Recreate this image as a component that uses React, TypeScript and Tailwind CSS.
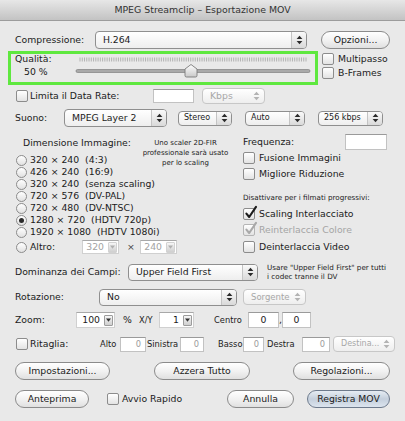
import { ReactNode } from "react";
import clsx from "clsx";

const UpDown = ({ color = "#2b2b2b" }: { color?: string }) => (
  <svg width="7" height="10" viewBox="0 0 7 10">
    <path d="M0.6 4 L3.5 0.8 L6.4 4 Z" fill={color} />
    <path d="M0.6 6 L3.5 9.2 L6.4 6 Z" fill={color} />
  </svg>
);

const Check = ({ checked = false, disabled = false }: { checked?: boolean; disabled?: boolean }) => (
  <span
    className={clsx(
      "relative block w-[12px] h-[12px] shrink-0 rounded-[2px] border bg-linear-to-b from-white to-[#e3e3e3]",
      disabled ? "border-[#b5b5b5]" : "border-[#8c8c8c]"
    )}
  >
    {checked && (
      <svg className="absolute -top-[4px] left-[0px]" width="14" height="15" viewBox="0 0 14 15">
        <path
          d="M2.4 8.6 L5.2 12 L12 1.8"
          fill="none"
          stroke={disabled ? "#a9a9a9" : "#1c1c1c"}
          strokeWidth="2.1"
          strokeLinecap="round"
          strokeLinejoin="round"
        />
      </svg>
    )}
  </span>
);

const Radio = ({ on = false }: { on?: boolean }) => (
  <span className="flex w-[11px] h-[11px] shrink-0 items-center justify-center rounded-full border border-[#8c8c8c] bg-linear-to-b from-white to-[#e1e1e1]">
    {on && <span className="block w-[5px] h-[5px] rounded-full bg-[#2b2b2b]" />}
  </span>
);

interface PopupProps {
  label: string;
  className?: string;
  mini?: boolean;
  disabled?: boolean;
}

const Popup = ({ label, className, mini, disabled }: PopupProps) => (
  <div
    className={clsx(
      "flex items-stretch rounded-[4px] border bg-linear-to-b from-white to-[#eeeeee] overflow-hidden",
      disabled ? "border-[#c7c7c7] text-[#a7a7a7]" : "border-[#8f8f8f]",
      mini ? "text-[8px]" : "",
      className
    )}
  >
    <span className={clsx("flex flex-1 items-center whitespace-nowrap", mini ? "pl-[5px]" : "pl-[7px]")}>{label}</span>
    <span
      className={clsx(
        "flex w-[15px] items-center justify-center",
        disabled ? "" : "bg-linear-to-b from-[#fafafa] to-[#d9d9d9] border-l border-[#c4c4c4]"
      )}
    >
      <UpDown color={disabled ? "#b3b3b3" : "#2b2b2b"} />
    </span>
  </div>
);

const Button = ({ children, className, primary }: { children: ReactNode; className?: string; primary?: boolean }) => (
  <button
    type="button"
    className={clsx(
      "flex h-[18px] items-center justify-center rounded-full border leading-none",
      primary
        ? "border-[#6d7a8c] bg-linear-to-b from-[#e6ecf3] via-[#c4cfdc] to-[#dce4ee]"
        : "border-[#8b8b8b] bg-linear-to-b from-white via-[#f2f2f2] to-[#e0e0e0]",
      className
    )}
  >
    {children}
  </button>
);

const Field = ({ value, className, muted }: { value?: string; className?: string; muted?: boolean }) => (
  <div
    className={clsx(
      "flex items-center justify-end bg-white border border-[#c2c2c2] border-t-[#9a9a9a] pr-[4px]",
      muted ? "text-[#9c9c9c]" : "",
      className
    )}
  >
    {value}
  </div>
);

const Combo = ({ value, className, muted }: { value: string; className?: string; muted?: boolean }) => (
  <div
    className={clsx(
      "flex items-center bg-white border border-[#d0d0d0] border-t-[#a8a8a8]",
      muted ? "text-[#a3a3a3]" : "",
      className
    )}
  >
    <span className="flex-1 text-right pr-[4px]">{value}</span>
    <span
      className={clsx(
        "flex w-[9px] h-[11px] mr-[1px] items-center justify-center rounded-[1px] border bg-linear-to-b from-[#f6f6f6] to-[#cfcfcf]",
        muted ? "border-[#d2d2d2]" : "border-[#9c9c9c]"
      )}
    >
      <svg width="5" height="4" viewBox="0 0 5 4">
        <path d="M0 0.5 L5 0.5 L2.5 3.8 Z" fill={muted ? "#b0b0b0" : "#333"} />
      </svg>
    </span>
  </div>
);

const CheckRow = ({
  label,
  checked,
  disabled,
  className,
}: {
  label: string;
  checked?: boolean;
  disabled?: boolean;
  className?: string;
}) => (
  <div className={clsx("flex h-[14px] items-center", className)}>
    <Check checked={checked} disabled={disabled} />
    <span className={clsx("ml-[4px]", disabled ? "text-[#a5a5a5]" : "")}>{label}</span>
  </div>
);

const QualitySlider = () => {
  const ticks = Array.from({ length: 101 }, (_, i) => 6 + i * 2.26);
  const knob = 117;
  return (
    <svg width="240" height="27" viewBox="0 0 240 27">
      {ticks.map((x) => (
        <line key={x} x1={x} y1="3.5" x2={x} y2="7.5" stroke="#a3a3a3" strokeWidth="0.8" />
      ))}
      <rect x="2" y="15.5" width="234" height="3" rx="1.5" fill="#a9a9a9" stroke="#7f7f7f" strokeWidth="0.7" />
      <defs>
        <linearGradient id="knobFill" x1="0" y1="0" x2="0" y2="1">
          <stop offset="0" stopColor="#ffffff" />
          <stop offset="1" stopColor="#c9c9c9" />
        </linearGradient>
      </defs>
      <path
        d={`M${knob} 10.5 L${knob + 6} 15 L${knob + 6} 21.5 Q${knob + 6} 23 ${knob + 4.5} 23 L${knob - 4.5} 23 Q${knob - 6} 23 ${knob - 6} 21.5 L${knob - 6} 15 Z`}
        fill="url(#knobFill)"
        stroke="#7a7a7a"
        strokeWidth="0.9"
        strokeLinejoin="round"
      />
    </svg>
  );
};

const sizes: [string, boolean][] = [
  ["320 × 240  (4:3)", false],
  ["426 × 240  (16:9)", false],
  ["320 × 240  (senza scaling)", false],
  ["720 × 576  (DV-PAL)", false],
  ["720 × 480  (DV-NTSC)", false],
  ["1280 × 720  (HDTV 720p)", true],
  ["1920 × 1080  (HDTV 1080i)", false],
];

export default function App() {
  return (
    <div className="w-[405px] h-[421px] overflow-hidden bg-[#e9e9e9] text-[#1b1b1b] text-[9.3px] leading-none font-['DejaVu_Sans',sans-serif]">
      {/* title bar */}
      <div className="flex h-[21px] items-center justify-center border-b border-[#9c9c9c] bg-linear-to-b from-[#e7e7e7] to-[#c3c3c3] text-[9.4px] text-[#333]">
        MPEG Streamclip – Esportazione MOV
      </div>

      <div className="flex flex-col">
        {/* compression */}
        <div className="mt-[10px] flex h-[18px] items-center pl-[15px]">
          <span className="w-[80px]">Compressione:</span>
          <Popup label="H.264" className="w-[212px] h-[18px]" />
          <Button className="ml-[14px] w-[69px]">Opzioni...</Button>
        </div>

        {/* quality */}
        <div className="mt-[2px] flex h-[34px]">
          <div className="ml-[8px] flex w-[310px] h-[34px] border-[3px] border-[#5fe83f]">
            <div className="flex w-[63px] flex-col pl-[4px]">
              <div className="flex h-[9px] items-center">Qualità:</div>
              <div className="mt-[4px] flex h-[9px] items-center pl-[9px]">50 %</div>
            </div>
            <QualitySlider />
          </div>
          <div className="ml-[4px] flex flex-col pt-[1px]">
            <CheckRow label="Multipasso" />
            <CheckRow label="B-Frames" />
          </div>
        </div>

        {/* data rate */}
        <div className="mt-[2px] flex h-[18px] items-center pl-[16px]">
          <Check />
          <span className="ml-[2px] w-[123px]">Limita il Data Rate:</span>
          <Field className="w-[41px] h-[14px]" />
          <Popup label="Kbps" disabled className="ml-[8px] w-[63px] h-[16px]" />
        </div>

        {/* audio */}
        <div className="mt-[4px] flex h-[18px] items-center pl-[15px]">
          <span className="w-[49px]">Suono:</span>
          <Popup label="MPEG Layer 2" className="w-[103px] h-[18px]" />
          <Popup label="Stereo" mini className="ml-[11px] w-[54px] h-[15px]" />
          <Popup label="Auto" mini className="ml-[13px] w-[60px] h-[15px]" />
          <Popup label="256 kbps" mini className="ml-[13px] w-[65px] h-[15px]" />
        </div>

        {/* image size + frame options */}
        <div className="mt-[5px] flex h-[123px]">
          <div className="flex w-[243px] flex-col pl-[16px]">
            <div className="flex">
              <div className="flex w-[122px] flex-col">
                <div className="flex h-[22px] items-center pl-[7px]">Dimensione Immagine:</div>
                {sizes.map(([label, on]) => (
                  <div key={label} className="flex h-[12px] items-center">
                    <Radio on={on} />
                    <span className="ml-[3px] whitespace-pre">{label}</span>
                  </div>
                ))}
              </div>
              <div className="w-[95px] pt-[6px] text-center text-[7px] leading-[10px] whitespace-nowrap">
                Uno scaler 2D-FIR
                <br />
                professionale sarà usato
                <br />
                per lo scaling
              </div>
            </div>
            <div className="mt-[3px] flex h-[12px] items-center">
              <Radio />
              <span className="ml-[3px] w-[52px]">Altro:</span>
              <Combo value="320" muted className="w-[37px] h-[14px]" />
              <span className="ml-[8px] w-[13px] text-[#444]">×</span>
              <Combo value="240" muted className="w-[37px] h-[14px]" />
            </div>
          </div>

          <div className="flex flex-1 flex-col">
            <div className="flex h-[19px] items-center">
              <span className="w-[102px]">Frequenza:</span>
              <Field className="w-[42px] h-[16px]" />
            </div>
            <CheckRow label="Fusione Immagini" />
            <CheckRow label="Migliore Riduzione" className="mt-[2px]" />
            <div className="mt-[12px] flex h-[10px] items-center text-[7.2px] whitespace-nowrap">
              Disattivare per i filmati progressivi:
            </div>
            <CheckRow label="Scaling Interlacciato" checked className="mt-[4px]" />
            <CheckRow label="Reinterlaccia Colore" checked disabled className="mt-[2px]" />
            <CheckRow label="Deinterlaccia Video" className="mt-[3px]" />
          </div>
        </div>

        {/* field dominance */}
        <div className="mt-[8px] flex h-[18px] items-center pl-[15px]">
          <span className="w-[113px] whitespace-nowrap">Dominanza dei Campi:</span>
          <Popup label="Upper Field First" className="w-[130px] h-[17px]" />
          <div className="ml-[9px] text-[7.2px] leading-[9px] whitespace-nowrap">
            Usare "Upper Field First" per tutti
            <br />i codec tranne il DV
          </div>
        </div>

        {/* rotation */}
        <div className="mt-[7px] flex h-[18px] items-center pl-[15px]">
          <span className="w-[84px]">Rotazione:</span>
          <Popup label="No" className="w-[138px] h-[17px]" />
          <Popup label="Sorgente" disabled className="ml-[6px] w-[63px] h-[16px] text-[8.5px]" />
        </div>

        {/* zoom */}
        <div className="mt-[5px] flex h-[18px] items-center pl-[15px]">
          <span className="w-[61px]">Zoom:</span>
          <Combo value="100" className="w-[39px] h-[16px]" />
          <span className="ml-[8px] w-[16px]">%</span>
          <span className="w-[20px] text-[8.3px]">X/Y</span>
          <Combo value="1" className="w-[35px] h-[16px]" />
          <span className="ml-[20px] w-[34px] text-[8.3px]">Centro</span>
          <Field value="0" className="w-[31px] h-[16px] justify-center! pr-0!" />
          <span className="w-[3px]">,</span>
          <Field value="0" className="w-[29px] h-[16px] justify-center! pr-0!" />
        </div>

        {/* crop */}
        <div className="mt-[6px] flex h-[18px] items-center pl-[16px] text-[8.3px]">
          <Check />
          <span className="ml-[2px] w-[70px] text-[9.3px]">Ritaglia:</span>
          <span className="w-[20px]">Alto</span>
          <Field value="0" muted className="w-[26px] h-[15px]" />
          <span className="ml-[1px] w-[33px]">Sinistra</span>
          <Field value="0" muted className="w-[24px] h-[15px]" />
          <span className="ml-[14px] w-[25px]">Basso</span>
          <Field value="0" muted className="w-[21px] h-[15px]" />
          <span className="ml-[3px] w-[35px]">Destra</span>
          <Field value="0" muted className="w-[28px] h-[15px]" />
          <Popup label="Destina..." disabled className="ml-[3px] w-[62px] h-[16px] text-[8px]" />
        </div>

        {/* buttons */}
        <div className="mt-[9px] flex h-[18px] items-center pl-[15px]">
          <Button className="w-[95px]">Impostazioni...</Button>
          <Button className="ml-[44px] w-[96px]">Azzera Tutto</Button>
          <Button className="ml-[43px] w-[97px]">Regolazioni...</Button>
        </div>

        <div className="mt-[10px] flex h-[18px] items-center pl-[15px]">
          <Button className="w-[74px]">Anteprima</Button>
          <span className="ml-[18px]">
            <Check />
          </span>
          <span className="ml-[3px] w-[105px]">Avvio Rapido</span>
          <Button className="w-[67px]">Annulla</Button>
          <Button primary className="ml-[13px] w-[83px]">
            Registra MOV
          </Button>
        </div>
      </div>
    </div>
  );
}
